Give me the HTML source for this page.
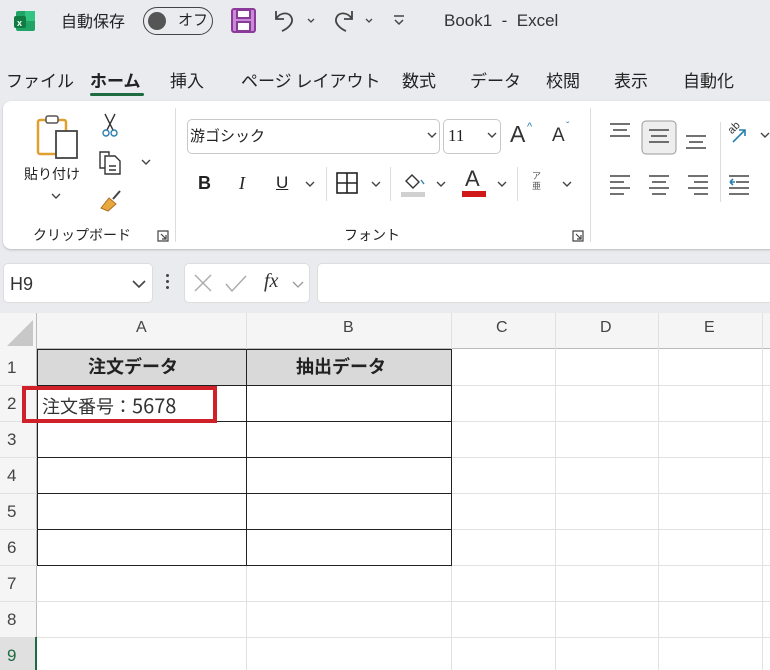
<!DOCTYPE html>
<html style="width:770px;height:670px;overflow:hidden"><head><meta charset="utf-8"><style>
*{margin:0;padding:0;box-sizing:border-box}
body{width:770px;height:670px;overflow:hidden;background:#e9ebef;font-family:"Liberation Sans","Noto Sans CJK JP",sans-serif;color:#222;position:relative}
.a{position:absolute;white-space:nowrap}
.jp{font-family:"Noto Sans CJK JP",sans-serif}
.ribbon{position:absolute;left:3px;top:101px;width:780px;height:148px;background:#fff;border-radius:8px;box-shadow:0 1px 2px #bbb}
.box{position:absolute;background:#fff;border:1px solid #c8c8c8;border-radius:5px}
.grid{position:absolute;left:0;top:313px;width:770px;height:357px;background:#fff}
.hl{position:absolute;background:#e1e1e1}
.vl{position:absolute;width:1px;background:#e1e1e1}
</style></head><body>
<svg class="a" style="left:13px;top:9px" width="24" height="24"><rect x="3" y="2" width="19" height="20" rx="2" fill="#21a366"/><rect x="12" y="2" width="10" height="10" fill="#33c481"/><rect x="1" y="7" width="12" height="12" rx="2" fill="#107c41"/><text x="4" y="17" font-size="9" font-weight="bold" fill="#fff" font-family="Liberation Sans">x</text></svg>
<div class="a jp" style="left:61px;top:8px;font-size:16px">自動保存</div>
<div class="a" style="left:143px;top:7px;width:70px;height:28px;border:1.5px solid #444;border-radius:14px"></div>
<div class="a" style="left:148px;top:12px;width:18px;height:18px;border-radius:9px;background:#555"></div>
<div class="a jp" style="left:178px;top:9px;font-size:15px">オフ</div>
<svg class="a" style="left:231px;top:8px" width="25" height="25"><rect x="1" y="1" width="23" height="23" rx="2" fill="#c98ad6" stroke="#8b3a9a" stroke-width="2"/><rect x="6" y="2" width="13" height="8" fill="#fff" stroke="#8b3a9a" stroke-width="2"/><rect x="6" y="14" width="13" height="9" fill="#fff" stroke="#8b3a9a" stroke-width="2"/></svg>
<svg class="a" style="left:272px;top:7px" width="50" height="26" fill="none" stroke="#444" stroke-width="1.8"><path d="M4 4v8h8M4 12c4-7 14-8 16 0c1 5-5 10-10 12"/><path d="M36 12l3 3 3-3" stroke-width="1.3"/></svg>
<svg class="a" style="left:330px;top:7px" width="50" height="26" fill="none" stroke="#444" stroke-width="1.8"><path d="M22 4v8h-8M22 12c-4-7-14-8-16 0c-1 5 5 10 10 12"/><path d="M36 12l3 3 3-3" stroke-width="1.3"/></svg>
<svg class="a" style="left:392px;top:12px" width="14" height="14" fill="none" stroke="#444" stroke-width="1.5"><path d="M2 4h10M3 8l4 4 4-4"/></svg>
<div class="a" style="left:444px;top:11px;font-size:17px;color:#333">Book1&nbsp; - &nbsp;Excel</div>
<div class="a jp" style="left:6px;top:67px;font-size:17px">ファイル</div>
<div class="a jp" style="left:90px;top:67px;font-size:17px;font-weight:bold">ホーム</div>
<div class="a" style="left:90px;top:93px;width:54px;height:3px;background:#1e6b41;border-radius:2px"></div>
<div class="a jp" style="left:170px;top:67px;font-size:17px">挿入</div>
<div class="a jp" style="left:241px;top:67px;font-size:17px">ページ レイアウト</div>
<div class="a jp" style="left:402px;top:67px;font-size:17px">数式</div>
<div class="a jp" style="left:470px;top:67px;font-size:17px">データ</div>
<div class="a jp" style="left:546px;top:67px;font-size:17px">校閲</div>
<div class="a jp" style="left:614px;top:67px;font-size:17px">表示</div>
<div class="a jp" style="left:683px;top:67px;font-size:17px">自動化</div>
<div class="ribbon"></div>
<svg class="a" style="left:36px;top:113px" width="46" height="48" fill="none"><rect x="2" y="7" width="28" height="34" rx="2" stroke="#e0a030" stroke-width="2.5"/><rect x="10" y="3" width="12" height="7" rx="2" fill="#fff" stroke="#555" stroke-width="1.5"/><rect x="20" y="18" width="21" height="27" fill="#fff" stroke="#444" stroke-width="1.8"/></svg>
<div class="a jp" style="left:24px;top:164px;font-size:14px">貼り付け</div>
<svg class="a" style="left:50px;top:192px" width="12" height="8" fill="none" stroke="#444" stroke-width="1.4"><path d="M2 2l4 4 4-4"/></svg>
<svg class="a" style="left:100px;top:112px" width="20" height="26" fill="none" stroke="#333" stroke-width="1.4"><path d="M5 2l8 16M15 2l-8 16"/><circle cx="6" cy="21" r="3" stroke="#2a7fb0"/><circle cx="14" cy="21" r="3" stroke="#2a7fb0"/></svg>
<svg class="a" style="left:97px;top:150px" width="30" height="26" fill="none" stroke="#333" stroke-width="1.4"><path d="M8 18H3V2h9v3"/><path d="M8 6h10l5 5v13H8z"/><path d="M12 16h7M12 20h7"/></svg>
<svg class="a" style="left:140px;top:158px" width="12" height="8" fill="none" stroke="#444" stroke-width="1.4"><path d="M2 2l4 4 4-4"/></svg>
<svg class="a" style="left:98px;top:189px" width="26" height="24"><path d="M3 19l8-10 7 6-8 7z" fill="#e8a840" stroke="#b07020"/><path d="M15 10l7-8" stroke="#444" stroke-width="2"/></svg>
<div class="a jp" style="left:33px;top:225px;font-size:14px">クリップボード</div>
<svg class="a" style="left:157px;top:230px" width="12" height="12" fill="none" stroke="#444" stroke-width="1.2"><path d="M1 1h10v10H1zM4 4l5 5M9 5v4H5"/></svg>
<div class="a" style="left:175px;top:108px;width:1px;height:134px;background:#ddd"></div>
<div class="box" style="left:187px;top:119px;width:253px;height:35px"></div>
<div class="a jp" style="left:190px;top:125px;font-size:15px">游ゴシック</div>
<svg class="a" style="left:427px;top:132px" width="10" height="8" fill="none" stroke="#444" stroke-width="1.4"><path d="M1 1l4 4 4-4"/></svg>
<div class="box" style="left:443px;top:119px;width:58px;height:35px"></div>
<div class="a" style="left:448px;top:126px;font-size:17px;font-family:'Liberation Serif',serif">11</div>
<svg class="a" style="left:487px;top:132px" width="10" height="8" fill="none" stroke="#444" stroke-width="1.4"><path d="M1 1l4 4 4-4"/></svg>
<div class="a" style="left:510px;top:121px;font-size:23px;color:#333">A</div><div class="a" style="left:527px;top:121px;font-size:11px;color:#2a7fb0">^</div>
<div class="a" style="left:552px;top:125px;font-size:19px;color:#333">A</div><div class="a" style="left:566px;top:121px;font-size:10px;color:#2a7fb0">ˇ</div>
<div class="a" style="left:198px;top:173px;font-size:18px;font-weight:bold">B</div>
<div class="a" style="left:239px;top:173px;font-size:18px;font-style:italic;font-family:'Liberation Serif',serif">I</div>
<div class="a" style="left:276px;top:173px;font-size:17px;text-decoration:underline">U</div>
<svg class="a" style="left:305px;top:181px" width="10" height="8" fill="none" stroke="#444" stroke-width="1.4"><path d="M1 1l4 4 4-4"/></svg>
<div class="a" style="left:326px;top:167px;width:1px;height:34px;background:#ddd"></div>
<svg class="a" style="left:335px;top:171px" width="24" height="24" fill="none" stroke="#222" stroke-width="1.6"><rect x="2" y="2" width="20" height="20"/><path d="M12 2v20M2 12h20"/></svg>
<svg class="a" style="left:371px;top:181px" width="10" height="8" fill="none" stroke="#444" stroke-width="1.4"><path d="M1 1l4 4 4-4"/></svg>
<div class="a" style="left:390px;top:167px;width:1px;height:34px;background:#ddd"></div>
<svg class="a" style="left:400px;top:170px" width="28" height="28" fill="none" stroke="#333" stroke-width="1.4"><path d="M6 11l6-6 7 7-6 6z"/><path d="M21 10l3 4" stroke="#2a7fb0"/><rect x="1" y="22" width="24" height="5" fill="#d0d0d0" stroke="none"/></svg>
<svg class="a" style="left:436px;top:181px" width="10" height="8" fill="none" stroke="#444" stroke-width="1.4"><path d="M1 1l4 4 4-4"/></svg>
<div class="a" style="left:465px;top:166px;font-size:22px;color:#333">A</div>
<div class="a" style="left:462px;top:191px;width:24px;height:6px;background:#d01818"></div>
<svg class="a" style="left:497px;top:181px" width="10" height="8" fill="none" stroke="#444" stroke-width="1.4"><path d="M1 1l4 4 4-4"/></svg>
<div class="a" style="left:517px;top:167px;width:1px;height:34px;background:#ddd"></div>
<div class="a jp" style="left:532px;top:171px;font-size:9px;line-height:10px;color:#555">ア<br>亜</div>
<svg class="a" style="left:562px;top:181px" width="10" height="8" fill="none" stroke="#444" stroke-width="1.4"><path d="M1 1l4 4 4-4"/></svg>
<div class="a jp" style="left:344px;top:225px;font-size:14px">フォント</div>
<svg class="a" style="left:572px;top:230px" width="12" height="12" fill="none" stroke="#444" stroke-width="1.2"><path d="M1 1h10v10H1zM4 4l5 5M9 5v4H5"/></svg>
<div class="a" style="left:590px;top:108px;width:1px;height:134px;background:#ddd"></div>
<svg class="a" style="left:608px;top:120px" width="160" height="80" fill="none" stroke="#444" stroke-width="1.6">
<path d="M2 4h20M5 10h14M2 16h20"/>
<rect x="34" y="1" width="34" height="33" rx="4" fill="#eee" stroke="#999" stroke-width="1"/>
<path d="M41 10h20M43 16h16M41 22h20"/>
<path d="M78 16h20M81 22h14M78 28h20"/>
<path d="M2 56h20M2 62h14M2 68h20M2 74h14"/>
<path d="M41 56h20M44 62h14M41 68h20M44 74h14"/>
<path d="M80 56h20M86 62h14M80 68h20M86 74h14"/>
<path d="M121 56h20M128 62h13M121 68h20M121 74h20"/>
<path d="M122 62h5M122 62l3-3M122 62l3 3" stroke="#2a7fb0"/>
<path d="M125 22l12-12M131 10h6v6" stroke="#2a7fb0"/>
</svg>
<div class="a" style="left:728px;top:122px;font-size:11px;transform:rotate(-45deg);color:#333">ab</div>
<svg class="a" style="left:760px;top:132px" width="10" height="8" fill="none" stroke="#444" stroke-width="1.4"><path d="M1 1l4 4 4-4"/></svg>
<div class="a" style="left:720px;top:122px;width:1px;height:80px;background:#ddd"></div>
<div class="box" style="left:3px;top:263px;width:150px;height:40px;border-color:#ddd"></div>
<div class="a" style="left:10px;top:274px;font-size:18px;color:#333">H9</div>
<svg class="a" style="left:132px;top:280px" width="14" height="9" fill="none" stroke="#444" stroke-width="1.6"><path d="M1 1l6 6 6-6"/></svg>
<div class="a" style="left:166px;top:274px;width:3px;height:3px;background:#444;border-radius:2px;box-shadow:0 6px #444,0 12px #444"></div>
<div class="box" style="left:184px;top:263px;width:126px;height:40px;border-color:#ddd"></div>
<svg class="a" style="left:192px;top:272px" width="60" height="24" fill="none" stroke="#aaa" stroke-width="1.4"><path d="M3 3l16 16M19 3L3 19M34 12l6 7 14-15"/></svg>
<div class="a" style="left:264px;top:270px;font-size:20px;font-style:italic;font-family:'Liberation Serif',serif;color:#333">fx</div>
<svg class="a" style="left:292px;top:281px" width="12" height="8" fill="none" stroke="#999" stroke-width="1.3"><path d="M1 1l5 5 5-5"/></svg>
<div class="box" style="left:317px;top:263px;width:470px;height:40px;border-color:#ddd"></div>
<div class="grid"></div>
<div class="a" style="left:0;top:313px;width:770px;height:36px;background:#f5f5f5;border-bottom:1px solid #bbb"></div>
<div class="a" style="left:0;top:313px;width:37px;height:357px;background:#f5f5f5;border-right:1px solid #bbb"></div>
<svg class="a" style="left:5px;top:318px" width="30" height="30"><path d="M28 2v26H2z" fill="#c8c8c8"/></svg>
<div class="vl" style="left:246px;top:313px;height:36px"></div>
<div class="vl" style="left:451px;top:313px;height:357px"></div>
<div class="vl" style="left:555px;top:313px;height:357px"></div>
<div class="vl" style="left:658px;top:313px;height:357px"></div>
<div class="vl" style="left:762px;top:313px;height:357px"></div>
<div class="vl" style="left:246px;top:565px;height:105px"></div>
<div class="a" style="left:136px;top:319px;font-size:16px;color:#444">A</div>
<div class="a" style="left:343px;top:319px;font-size:16px;color:#444">B</div>
<div class="a" style="left:496px;top:319px;font-size:16px;color:#444">C</div>
<div class="a" style="left:600px;top:319px;font-size:16px;color:#444">D</div>
<div class="a" style="left:704px;top:319px;font-size:16px;color:#444">E</div>
<div class="hl" style="left:0;top:385px;width:770px;height:1px"></div>
<div class="hl" style="left:0;top:421px;width:770px;height:1px"></div>
<div class="hl" style="left:0;top:457px;width:770px;height:1px"></div>
<div class="hl" style="left:0;top:493px;width:770px;height:1px"></div>
<div class="hl" style="left:0;top:529px;width:770px;height:1px"></div>
<div class="hl" style="left:0;top:565px;width:770px;height:1px"></div>
<div class="hl" style="left:0;top:601px;width:770px;height:1px"></div>
<div class="hl" style="left:0;top:637px;width:770px;height:1px"></div>
<div class="a" style="left:0;top:637px;width:37px;height:33px;background:#e0e0e0;border-right:2px solid #1e6b41"></div>
<div class="a" style="left:7px;top:350px;height:320px;overflow:hidden;font-size:17px;color:#444;line-height:36px">1<br>2<br>3<br>4<br>5<br>6<br>7<br>8<br><span style="color:#1e6b41">9</span></div>
<div class="a" style="left:37px;top:349px;width:415px;height:36px;background:#d9d9d9"></div>
<div class="a" style="left:37px;top:349px;width:415px;height:217px;border:1px solid #222"></div>
<div class="a" style="left:246px;top:349px;width:1px;height:217px;background:#222"></div>
<div class="a" style="left:37px;top:385px;width:415px;height:1px;background:#222"></div>
<div class="a" style="left:37px;top:421px;width:415px;height:1px;background:#222"></div>
<div class="a" style="left:37px;top:457px;width:415px;height:1px;background:#222"></div>
<div class="a" style="left:37px;top:493px;width:415px;height:1px;background:#222"></div>
<div class="a" style="left:37px;top:529px;width:415px;height:1px;background:#222"></div>
<div class="a jp" style="left:88px;top:353px;font-size:18px;font-weight:bold">注文データ</div>
<div class="a jp" style="left:296px;top:353px;font-size:18px;font-weight:bold">抽出データ</div>
<div class="a jp" style="left:42px;top:390px;font-size:18px;color:#333">注文番号：<span style="font-size:20px">5678</span></div>
<div class="a" style="left:22px;top:386px;width:195px;height:37px;border:4px solid #d0202a"></div>
</body></html>
